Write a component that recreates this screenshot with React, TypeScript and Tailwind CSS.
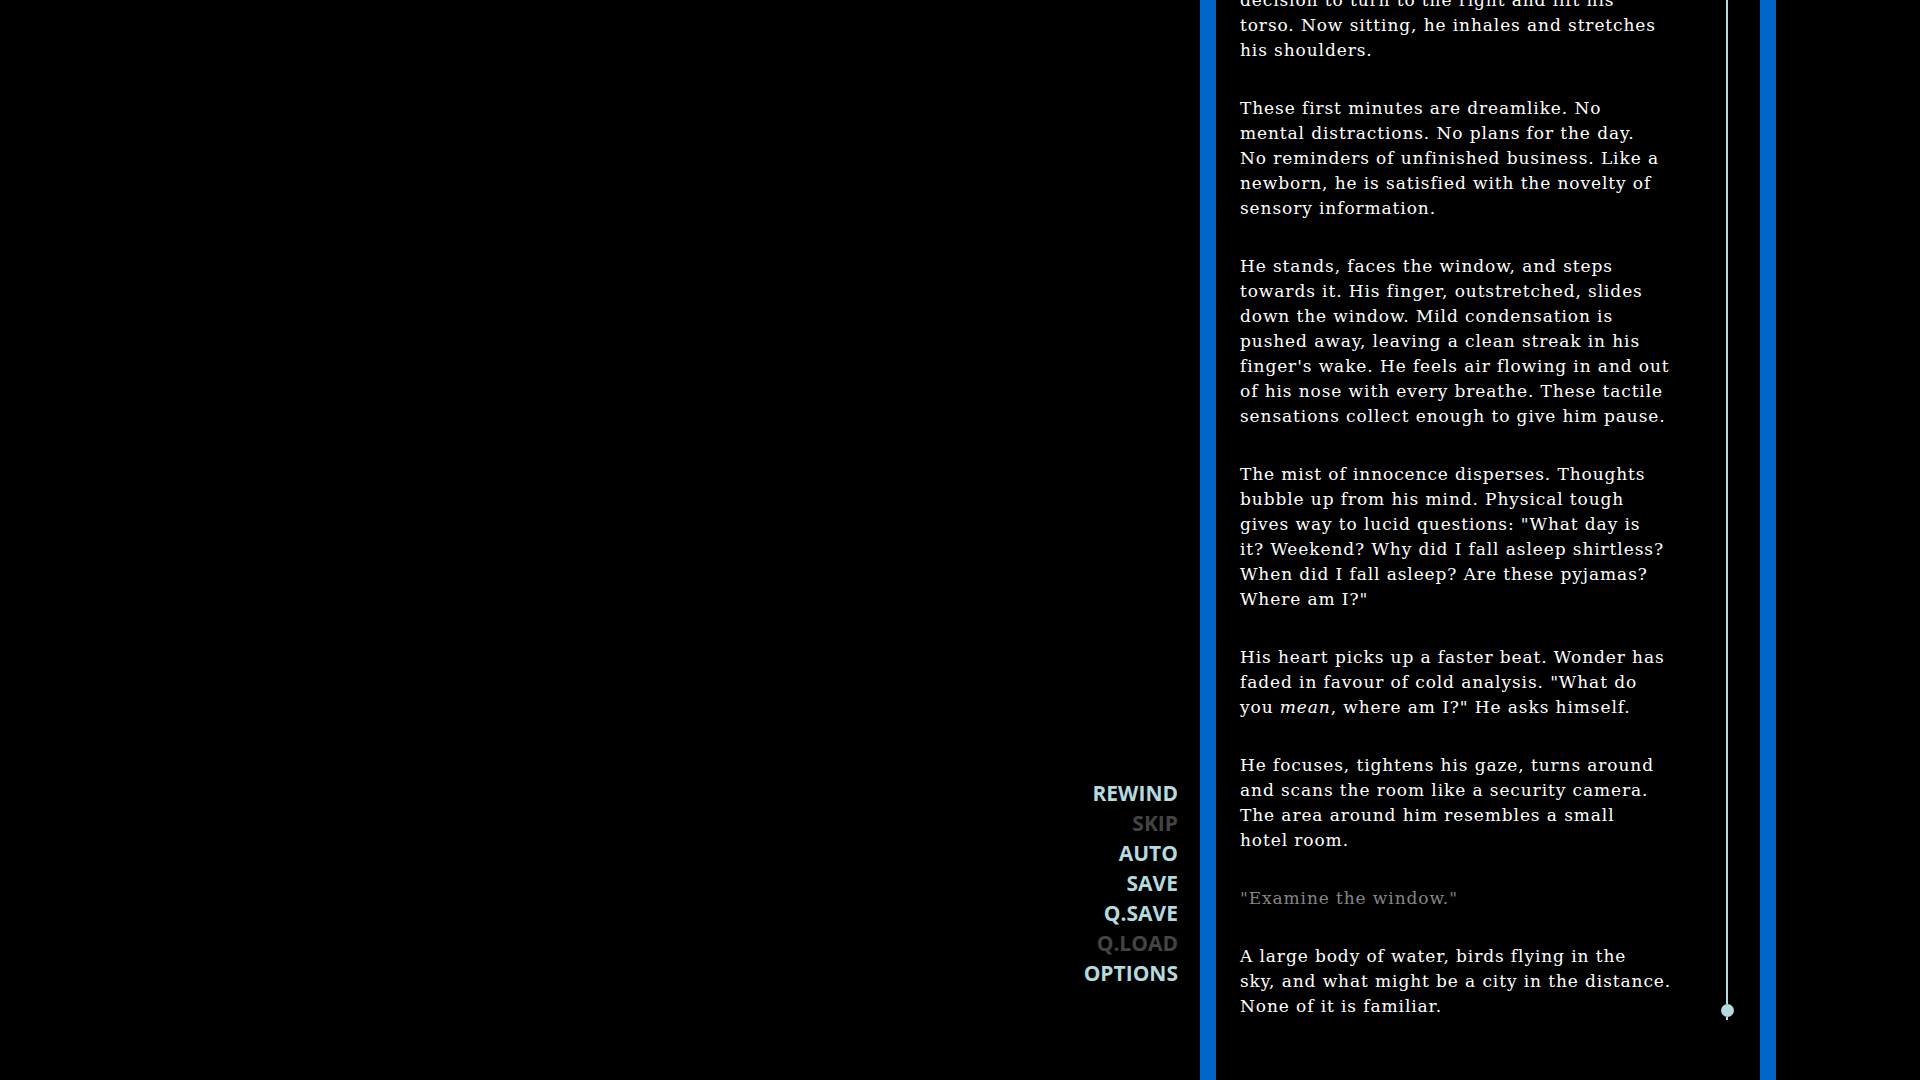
import React from 'react';

type Line = React.ReactNode;

const paragraphs: { lines: Line[]; muted?: boolean }[] = [
  {
    lines: [
      'decision to turn to the right and lift his',
      'torso. Now sitting, he inhales and stretches',
      'his shoulders.',
    ],
  },
  {
    lines: [
      'These first minutes are dreamlike. No',
      'mental distractions. No plans for the day.',
      'No reminders of unfinished business. Like a',
      'newborn, he is satisfied with the novelty of',
      'sensory information.',
    ],
  },
  {
    lines: [
      'He stands, faces the window, and steps',
      'towards it. His finger, outstretched, slides',
      'down the window. Mild condensation is',
      'pushed away, leaving a clean streak in his',
      "finger's wake. He feels air flowing in and out",
      'of his nose with every breathe. These tactile',
      'sensations collect enough to give him pause.',
    ],
  },
  {
    lines: [
      'The mist of innocence disperses. Thoughts',
      'bubble up from his mind. Physical tough',
      'gives way to lucid questions: "What day is',
      'it? Weekend? Why did I fall asleep shirtless?',
      'When did I fall asleep? Are these pyjamas?',
      'Where am I?"',
    ],
  },
  {
    lines: [
      'His heart picks up a faster beat. Wonder has',
      'faded in favour of cold analysis. "What do',
      <>
        you <em>mean</em>, where am I?" He asks himself.
      </>,
    ],
  },
  {
    lines: [
      'He focuses, tightens his gaze, turns around',
      'and scans the room like a security camera.',
      'The area around him resembles a small',
      'hotel room.',
    ],
  },
  { lines: ['"Examine the window."'], muted: true },
  {
    lines: [
      'A large body of water, birds flying in the',
      'sky, and what might be a city in the distance.',
      'None of it is familiar.',
    ],
  },
];

const menu = [
  { label: 'REWIND', active: true },
  { label: 'SKIP', active: false },
  { label: 'AUTO', active: true },
  { label: 'SAVE', active: true },
  { label: 'Q.SAVE', active: true },
  { label: 'Q.LOAD', active: false },
  { label: 'OPTIONS', active: true },
];

export default function App() {
  return (
    <div className="flex h-screen w-full overflow-hidden bg-black">
      {/* quick menu */}
      <div className="flex w-[1200px] shrink-0 flex-col items-end justify-end pb-[92px] pr-[22px]">
        {menu.map((m) => (
          <span
            key={m.label}
            className={`text-[21px] font-bold leading-[30px] font-['Open_Sans',sans-serif] ${
              m.active ? 'text-[#b4d9df]' : 'text-[#444444]'
            }`}
          >
            {m.label}
          </span>
        ))}
      </div>

      <div className="w-4 shrink-0 bg-[#0066cc]" />

      {/* history text */}
      <div className="flex w-[544px] shrink-0">
        <div className="flex w-[504px] flex-col justify-end overflow-hidden pb-[61px] pl-6 font-['DejaVu_Serif',serif] text-[17px] leading-[25px] tracking-[0.9px]">
          {paragraphs.map((p, i) => (
            <p
              key={i}
              className={`mt-[33px] first:mt-0 ${p.muted ? 'text-[#858585]' : 'text-white'}`}
            >
              {p.lines.map((l, j) => (
                <span key={j} className="block whitespace-nowrap">
                  {l}
                </span>
              ))}
            </p>
          ))}
        </div>

        {/* scrollbar */}
        <div className="flex w-[14px] flex-col items-center pb-[60px]">
          <div className="w-[2px] flex-1 bg-[#b6dae0]" />
          <div className="h-[13px] w-[13px] rounded-full bg-[#b6dae0]" />
          <div className="h-[3px] w-[2px] bg-[#b6dae0]" />
        </div>
      </div>

      <div className="w-4 shrink-0 bg-[#0066cc]" />
    </div>
  );
}
